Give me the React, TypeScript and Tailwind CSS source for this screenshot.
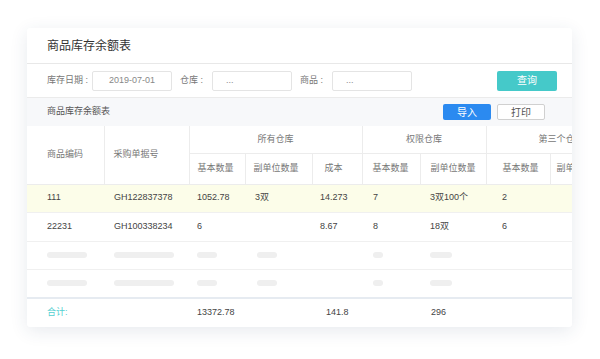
import React from 'react';

// ---------------------------------------------------------------------------
// Data
// ---------------------------------------------------------------------------

type Row = string[];

const colWidths = [77, 85, 56, 67, 50, 58, 66, 64, 86];
const padLeft = ['pl-[20px]', 'pl-[10px]', 'pl-[8px]', 'pl-[10px]', 'pl-[8px]', 'pl-[11px]', 'pl-[10px]', 'pl-[16px]', 'pl-[6px]'];

const rows: { cells: Row; highlight?: boolean }[] = [
  { cells: ['111', 'GH122837378', '1052.78', '3双', '14.273', '7', '3双100个', '2', ''], highlight: true },
  { cells: ['22231', 'GH100338234', '6', '', '8.67', '8', '18双', '6', ''] },
];

// skeleton widths per column (0 = empty)
const skeleton = [40, 60, 20, 20, 0, 10, 22, 0, 0];

const font = "font-['Liberation_Sans','Noto_Sans_CJK_SC',sans-serif]";

// ---------------------------------------------------------------------------
// Filter bar
// ---------------------------------------------------------------------------

function Field({ label, labelW, value, center }: { label: string; labelW: string; value: string; center?: boolean }) {
  return (
    <div className="flex items-center">
      <span className={labelW + ' whitespace-nowrap text-[9px] text-[#777]'}>{label}</span>
      <div
        className={
          'ml-[5px] flex h-[20px] w-[80px] items-center rounded-[2px] border border-[#e4e4e4] bg-white text-[9px] text-[#888] ' +
          (center ? 'justify-center' : 'pl-[13px]')
        }
      >
        {value}
      </div>
    </div>
  );
}

// ---------------------------------------------------------------------------
// Table
// ---------------------------------------------------------------------------

function InventoryTable() {
  const th = 'border-r border-b border-[#ececec] font-normal text-[#777] text-[9px] whitespace-nowrap';
  const left = th + ' text-left';
  const mid = th + ' text-center';
  return (
    <table className="table-fixed border-collapse" style={{ width: colWidths.reduce((a, b) => a + b, 0) }}>
      <colgroup>
        {colWidths.map((w, i) => (
          <col key={i} style={{ width: w }} />
        ))}
      </colgroup>
      <thead>
        <tr className="h-[27px]">
          <th rowSpan={2} className={left + ' pl-[20px]'}>商品编码</th>
          <th rowSpan={2} className={left + ' pl-[9px]'}>采购单据号</th>
          <th colSpan={3} className={mid}>所有仓库</th>
          <th colSpan={2} className={mid}>权限仓库</th>
          <th colSpan={2} className={mid}>第三个仓库</th>
        </tr>
        <tr className="h-[31px]">
          <th className={left + ' pl-[8px]'}>基本数量</th>
          <th className={left + ' pl-[8px]'}>副单位数量</th>
          <th className={left + ' pl-[12px]'}>成本</th>
          <th className={left + ' pl-[10px]'}>基本数量</th>
          <th className={left + ' pl-[10px]'}>副单位数量</th>
          <th className={left + ' pl-[16px]'}>基本数量</th>
          <th className={left + ' pl-[6px]'}>副单位数量</th>
        </tr>
      </thead>
      <tbody>
        {rows.map((r, ri) => (
          <tr
            key={ri}
            className={(ri === 0 ? 'h-[28px] ' : 'h-[29px] ') + 'border-b border-[#f0f0f0] ' + (r.highlight ? 'bg-[#fcfde9]' : 'bg-white')}
          >
            {r.cells.map((c, ci) => (
              <td key={ci} className={padLeft[ci] + ' text-[9px] text-[#444] whitespace-nowrap'}>
                {c}
              </td>
            ))}
          </tr>
        ))}
        {[0, 1].map((k) => (
          <tr key={'s' + k} className={(k === 0 ? 'h-[28px] ' : 'h-[29px] ') + 'border-b border-[#f0f0f0]'}>
            {skeleton.map((w, ci) => (
              <td key={ci} className={ci === 3 ? 'pl-[12px]' : padLeft[ci]}>
                {w > 0 && <div className="h-[6px] rounded-full bg-[#efefef]" style={{ width: w }} />}
              </td>
            ))}
          </tr>
        ))}
      </tbody>
      <tfoot>
        <tr className="h-[29px] border-t-2 border-[#e6ebf1]">
          <td className="pl-[20px] text-[9px] text-[#52cfd0]">合计:</td>
          <td />
          <td className="pl-[8px] text-[9px] text-[#444]">13372.78</td>
          <td />
          <td className="pl-[14px] text-[9px] text-[#444]">141.8</td>
          <td />
          <td className="pl-[11px] text-[9px] text-[#444]">296</td>
          <td />
          <td />
        </tr>
      </tfoot>
    </table>
  );
}

// ---------------------------------------------------------------------------
// Page
// ---------------------------------------------------------------------------

export default function App() {
  return (
    <div className={'h-[359px] w-[600px] overflow-hidden bg-white pl-[27px] pt-[28px] ' + font}>
      <div className="flex h-[299px] w-[545px] flex-col overflow-hidden rounded-[3px] bg-white shadow-[0_4px_18px_rgba(40,60,100,0.11)]">
        {/* Title */}
        <div className="flex h-[36px] shrink-0 items-center border-b border-[#e8e8e8] pl-[20px] text-[12px] text-[#333]">
          商品库存余额表
        </div>

        {/* Filters */}
        <div className="flex h-[34px] shrink-0 items-center border-b border-[#ebebeb] pl-[20px] pr-[15px]">
          <Field label="库存日期 :" labelW="w-[40px]" value="2019-07-01" center />
          <div className="ml-[8px]">
            <Field label="仓库 :" labelW="w-[27px]" value="..." />
          </div>
          <div className="ml-[8px]">
            <Field label="商品 :" labelW="w-[27px]" value="..." />
          </div>
          <button className="ml-auto flex h-[20px] w-[60px] items-center justify-center rounded-[2px] bg-[#45c9c9] text-[10px] text-white">
            查询
          </button>
        </div>

        {/* Toolbar */}
        <div className="flex h-[28px] shrink-0 items-center bg-[#f7f8fa] pl-[20px] pr-[27px]">
          <span className="text-[9px] text-[#555]">商品库存余额表</span>
          <div className="ml-auto flex items-center gap-[6px]">
            <button className="flex h-[16px] w-[48px] items-center justify-center rounded-[2px] bg-[#2b8af0] text-[10px] text-white">
              导入
            </button>
            <button className="flex h-[16px] w-[48px] items-center justify-center rounded-[2px] border border-[#d0d0d0] bg-white text-[10px] text-[#555]">
              打印
            </button>
          </div>
        </div>

        {/* Table */}
        <div className="flex-1 overflow-hidden">
          <InventoryTable />
        </div>
      </div>
    </div>
  );
}
